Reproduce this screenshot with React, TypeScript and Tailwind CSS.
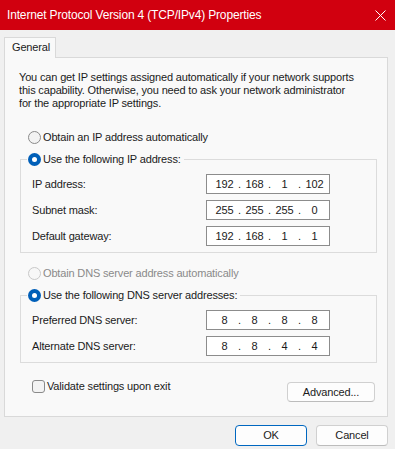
function Radio({ checked, disabled }: { checked?: boolean; disabled?: boolean }) {
  if (checked) {
    return (
      <span className="flex h-[13px] w-[13px] shrink-0 items-center justify-center rounded-full bg-[#005fb8]">
        <span className="h-[5px] w-[5px] rounded-full bg-white" />
      </span>
    );
  }
  return (
    <span
      className={
        disabled
          ? "h-[13px] w-[13px] shrink-0 rounded-full border border-[#c8c8c8] bg-[#f7f7f7]"
          : "h-[13px] w-[13px] shrink-0 rounded-full border border-[#8a8a8a] bg-[#f3f3f3]"
      }
    />
  );
}

function IpBox({ parts }: { parts: string[] }) {
  return (
    <div className="flex h-[20px] w-[124px] items-center border border-[#8c8c8c] bg-white pl-[7px] text-[#1a1a1a]">
      {parts.map((p, i) => (
        <div key={i} className="flex items-center">
          {i > 0 && <span className="w-[9px] text-center">.</span>}
          <span className="w-[21px] text-center">{p}</span>
        </div>
      ))}
    </div>
  );
}

function Group({
  title,
  rows,
}: {
  title: string;
  rows: { label: string; parts: string[] }[];
}) {
  return (
    <div className="mr-[10px] ml-[15px] border border-[#dcdcdc] pb-[6px]">
      <div className="-mt-[8px] ml-[6px] flex h-[15px] w-fit items-center gap-[2px] bg-[#f9f9f9] pr-[3px] pl-[1px]">
        <Radio checked />
        <span>{title}</span>
      </div>
      <div className="flex flex-col gap-[6px] pt-[7px] pl-[11px]">
        {rows.map((r) => (
          <div key={r.label} className="flex items-center">
            <span className="w-[174px]">{r.label}</span>
            <IpBox parts={r.parts} />
          </div>
        ))}
      </div>
    </div>
  );
}

export default function App() {
  return (
    <div className="flex h-[449px] w-[395px] flex-col overflow-hidden bg-[#f0f0f0] font-['Liberation_Sans',Arial,sans-serif] text-[11px] leading-[13px] tracking-[-0.16px] text-[#1b1b1b]">
      {/* title bar */}
      <div className="flex h-[30px] shrink-0 items-center justify-between bg-[#d1000f] pr-[9px] pl-[7px] text-[12px] text-white">
        <span>Internet Protocol Version 4 (TCP/IPv4) Properties</span>
        <svg width="11" height="11" viewBox="0 0 11 11">
          <path d="M0.5 0.5 L10.5 10.5 M10.5 0.5 L0.5 10.5" stroke="white" strokeWidth="1" fill="none" />
        </svg>
      </div>

      {/* tab */}
      <div className="mt-[7px] flex pl-[4px]">
        <div className="relative z-10 -mb-px flex h-[21px] w-[52px] items-center border border-b-0 border-[#d9d9d9] bg-[#f9f9f9] pb-[1px] pl-[7px]">
          General
        </div>
      </div>

      {/* panel */}
      <div className="ml-[4px] flex w-[384px] flex-col border border-[#d9d9d9] bg-[#f9f9f9] pb-[14px]">
        <p className="ml-[14px] pt-[13px]">
          You can get IP settings assigned automatically if your network supports
          <br />
          this capability. Otherwise, you need to ask your network administrator
          <br />
          for the appropriate IP settings.
        </p>

        <div className="mt-[20px] ml-[23px] flex h-[15px] items-center gap-[2px]">
          <Radio />
          <span>Obtain an IP address automatically</span>
        </div>

        <div className="mt-[14px]">
          <Group
            title="Use the following IP address:"
            rows={[
              { label: "IP address:", parts: ["192", "168", "1", "102"] },
              { label: "Subnet mask:", parts: ["255", "255", "255", "0"] },
              { label: "Default gateway:", parts: ["192", "168", "1", "1"] },
            ]}
          />
        </div>

        <div className="mt-[13px] ml-[23px] flex h-[15px] items-center gap-[2px] text-[#8a8a8a]">
          <Radio disabled />
          <span>Obtain DNS server address automatically</span>
        </div>

        <div className="mt-[14px]">
          <Group
            title="Use the following DNS server addresses:"
            rows={[
              { label: "Preferred DNS server:", parts: ["8", "8", "8", "8"] },
              { label: "Alternate DNS server:", parts: ["8", "8", "4", "4"] },
            ]}
          />
        </div>

        <div className="mt-[16px] flex items-start justify-between pr-[12px] pl-[27px]">
          <div className="flex h-[15px] items-center gap-[2px]">
            <span className="h-[13px] w-[13px] rounded-[3px] border border-[#8a8a8a] bg-[#f3f3f3]" />
            <span>Validate settings upon exit</span>
          </div>
          <button className="mt-[3px] flex h-[20px] w-[88px] items-center justify-center rounded-[4px] border border-[#d0d0d0] border-b-[#bcbcbc] bg-[#fdfdfd]">
            Advanced...
          </button>
        </div>
      </div>

      {/* dialog buttons */}
      <div className="mt-[8px] flex justify-end gap-[9px] pr-[7px]">
        <button className="flex h-[21px] w-[72px] items-center justify-center rounded-[4px] border border-[#0067c0] bg-[#fdfdfd]">
          OK
        </button>
        <button className="flex h-[21px] w-[72px] items-center justify-center rounded-[4px] border border-[#d0d0d0] border-b-[#bcbcbc] bg-[#fdfdfd]">
          Cancel
        </button>
      </div>
    </div>
  );
}
